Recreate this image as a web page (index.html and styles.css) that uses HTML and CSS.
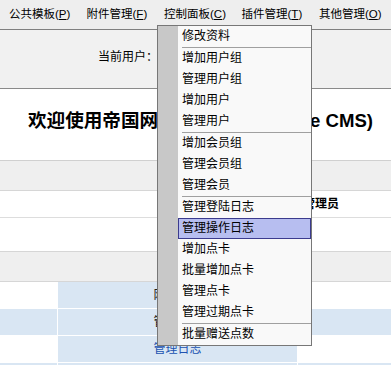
FILE: index.html
```html
<!DOCTYPE html>
<html lang="zh-CN">
<head>
    <meta charset="UTF-8">
    <meta name="viewport" content="width=device-width, initial-scale=1.0">
    <title>帝国网站管理系统</title>
    <link rel="stylesheet" href="styles.css">
</head>
<body>
    <div class="menubar">
        <div class="menu-item">公共模板(<u>P</u>)</div>
        <div class="menu-item">附件管理(<u>F</u>)</div>
        <div class="menu-item open">控制面板(<u>C</u>)
            <div class="dropdown">
                <div class="drop-item">修改资料</div>
                <div class="drop-sep"></div>
                <div class="drop-item">增加用户组</div>
                <div class="drop-item">管理用户组</div>
                <div class="drop-item">增加用户</div>
                <div class="drop-item">管理用户</div>
                <div class="drop-sep"></div>
                <div class="drop-item">增加会员组</div>
                <div class="drop-item">管理会员组</div>
                <div class="drop-item">管理会员</div>
                <div class="drop-sep"></div>
                <div class="drop-item">管理登陆日志</div>
                <div class="drop-item active">管理操作日志</div>
                <div class="drop-item">增加点卡</div>
                <div class="drop-item">批量增加点卡</div>
                <div class="drop-item">管理点卡</div>
                <div class="drop-item">管理过期点卡</div>
                <div class="drop-sep"></div>
                <div class="drop-item">批量赠送点数</div>
            </div>
        </div>
        <div class="menu-item">插件管理(<u>T</u>)</div>
        <div class="menu-item">其他管理(<u>O</u>)</div>
    </div>

    <div class="userbar">当前用户：</div>

    <div class="welcome">
        <h1>欢迎使用帝国网站管理系统(Empire CMS)</h1>
    </div>

    <div class="band"></div>
    <div class="info-row"><b>超级管理员</b></div>
    <div class="spacer"></div>
    <div class="band band-top"></div>

    <div class="links">
        <div class="cell"></div>
        <div class="cell mid">网站设置</div>
        <div class="cell"></div>

        <div class="cell alt"></div>
        <div class="cell mid">管理栏目</div>
        <div class="cell alt"></div>

        <div class="cell"></div>
        <div class="cell mid link">管理日志</div>
        <div class="cell"></div>

        <div class="cell alt"></div>
        <div class="cell mid"></div>
        <div class="cell alt"></div>
    </div>
</body>
</html>
```

FILE: styles.css
```css
html {
    overflow: hidden;
}
body {
    margin: 0;
    font-family: "Liberation Sans", "Noto Sans CJK SC", sans-serif;
    font-size: 12px;
    color: #000;
    background: #fff;
}
.menubar {
    display: flex;
    height: 29px;
    padding-left: 2px;
    background: #eeeeee;
    border-bottom: 1px solid #808080;
}
.menu-item {
    position: relative;
    width: 77.5px;
    padding-left: 7px;
    box-sizing: border-box;
    line-height: 29px;
    font-size: 11.5px;
    white-space: nowrap;
}
.dropdown {
    position: absolute;
    left: 0;
    top: 25px;
    width: 153px;
    border: 1px solid #777;
    background: linear-gradient(90deg, #c8c8c8 0, #c8c8c8 20px, #f9f9f9 20px);
    z-index: 10;
}
.drop-item {
    margin-left: 20px;
    height: 19px;
    line-height: 19px;
    padding-left: 3px;
    border: 1px solid transparent;
    font-size: 12px;
}
.drop-item.active {
    background: #b7bef0;
    border-color: #3b3b8e;
}
.drop-sep {
    height: 1px;
    margin-left: 24px;
    background: #a0a0a0;
}
.userbar {
    height: 58px;
    line-height: 55px;
    padding-left: 98px;
    background: #f1f1f1;
    border-bottom: 1px solid #8a8a8a;
}
.welcome {
    height: 71px;
    border-bottom: 1px solid #d0d0d0;
}
.welcome h1 {
    margin: 0;
    padding: 20px 0 0 10px;
    line-height: 24px;
    font-size: 18.6px;
    text-align: center;
}
.band {
    height: 29px;
    background: #efefef;
    border-bottom: 1px solid #d6d6d6;
}
.band-top {
    border-top: 1px solid #d6d6d6;
}
.info-row {
    height: 26px;
    line-height: 26px;
    padding-left: 279px;
    border-bottom: 1px solid #dddddd;
}
.spacer {
    height: 33px;
}
.links {
    display: grid;
    grid-template-columns: 57px 239px 1fr;
    grid-auto-rows: 26px;
    gap: 1px;
    background: #fff;
}
.cell {
    background: #fff;
    line-height: 26px;
}
.cell.alt, .cell.mid {
    background: #d9e6f3;
}
.cell.mid {
    text-align: center;
    color: #222;
}
.cell.link {
    color: #2052b0;
}
```
